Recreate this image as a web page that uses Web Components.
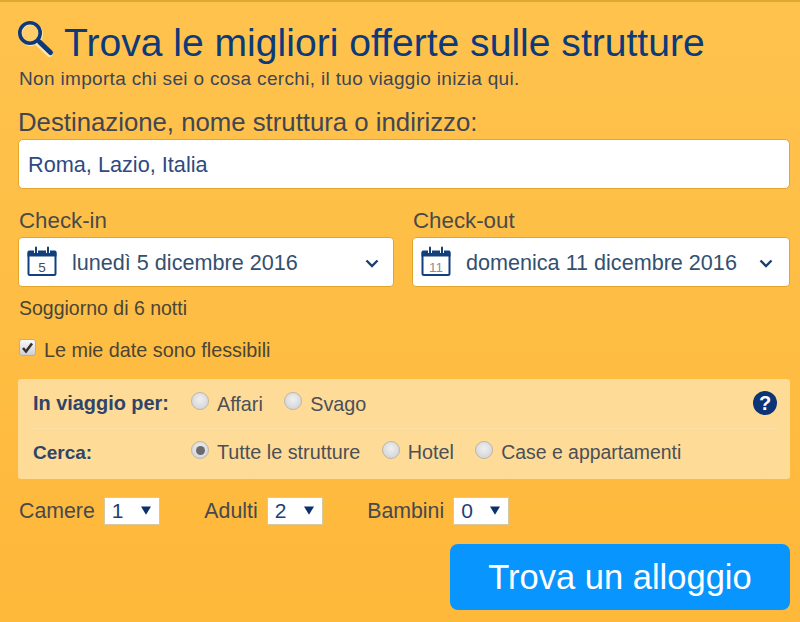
<!DOCTYPE html>
<html lang="it">
<head>
<meta charset="utf-8">
<title>Trova un alloggio</title>
<style>
html,body{margin:0;padding:0;width:800px;height:622px;overflow:hidden;}
body{font-family:"Liberation Sans",Arial,sans-serif;}
</style>
</head>
<body>
<search-box>
  <search-heading slot="head" subtitle="Non importa chi sei o cosa cerchi, il tuo viaggio inizia qui.">Trova le migliori offerte sulle strutture</search-heading>
  <dest-field label="Destinazione, nome struttura o indirizzo:" value="Roma, Lazio, Italia"></dest-field>
  <date-row>
    <date-field label="Check-in" day="5" value="lunedì 5 dicembre 2016"></date-field>
    <date-field label="Check-out" day="11" value="domenica 11 dicembre 2016" style="--day-color:#8a8f96"></date-field>
  </date-row>
  <stay-info text="Soggiorno di 6 notti" label="Le mie date sono flessibili"></stay-info>
  <option-panel>
    <option-row label="In viaggio per:" help style="--text-down:2px">
      <radio-option>Affari</radio-option>
      <radio-option>Svago</radio-option>
    </option-row>
    <option-row label="Cerca:" divider style="--label-size:19px">
      <radio-option checked>Tutte le strutture</radio-option>
      <radio-option>Hotel</radio-option>
      <radio-option style="font-size:19.400px">Case e appartamenti</radio-option>
    </option-row>
  </option-panel>
  <guest-row>
    <guest-select label="Camere" value="1"></guest-select>
    <guest-select label="Adulti" value="2"></guest-select>
    <guest-select label="Bambini" value="0"></guest-select>
  </guest-row>
  <submit-button>Trova un alloggio</submit-button>
</search-box>

<script>
class SearchBox extends HTMLElement{
    constructor(){
        super();
        this.attachShadow({mode:'open'});
        this.shadowRoot.innerHTML = `
        <style>
            :host{
                display:block;
                box-sizing:border-box;
                width:800px;
                height:622px;
                padding:18px 10px 0 18px;
                border-top:2px solid #e0a82e;
                background:linear-gradient(#fec34e,#feb83a);
                color:#3f4a5c;
            }
        </style>
        <slot name="head"></slot>
        <slot></slot>`;
    }
}
customElements.define('search-box',SearchBox);

class SearchHeading extends HTMLElement{
    constructor(){
        super();
        this.attachShadow({mode:'open'});
        this.shadowRoot.innerHTML = `
        <style>
            :host{display:block;height:84px;margin-left:-1px;}
            .top{display:flex;align-items:center;gap:9px;height:46px;}
            svg{flex:none;width:38px;height:38px;margin-top:-6px;}
            h1{margin:0;font-size:39.100px;line-height:46px;font-weight:normal;color:#0d3a7a;white-space:nowrap;}
            p{margin:2px 0 0 2px;font-size:19px;line-height:22px;letter-spacing:.33px;color:#3d4657;white-space:nowrap;}
        </style>
        <div class="top">
            <svg viewBox="0 0 38 38">
                <circle cx="13.800" cy="13" r="10.400" fill="none" stroke="#fff" stroke-width="3.500" opacity=".55"/>
                <path d="M22 23 L32.500 33" stroke="#fff" stroke-width="6" stroke-linecap="round" opacity=".6"/>
                <circle cx="13" cy="12" r="10.200" fill="#ffd98a" fill-opacity=".5" stroke="#0d3a7a" stroke-width="3.600"/>
                <path d="M22.500 21 L33.500 31.500" stroke="#0d3a7a" stroke-width="5" stroke-linecap="round"/>
            </svg>
            <h1><slot></slot></h1>
        </div>
        <p></p>`;
    }
    connectedCallback(){
        this.shadowRoot.querySelector('p').textContent = this.getAttribute('subtitle');
    }
}
customElements.define('search-heading',SearchHeading);

class DestField extends HTMLElement{
    constructor(){
        super();
        this.attachShadow({mode:'open'});
        this.shadowRoot.innerHTML = `
        <style>
            :host{display:block;margin-top:5px;}
            label{display:block;font-size:25.750px;line-height:26px;color:#3f4654;white-space:nowrap;}
            .box{
                box-sizing:border-box;height:50px;margin-top:4px;padding:2px 0 0 9px;
                display:flex;align-items:center;
                background:#fff;border:1px solid #e2a52c;border-radius:5px;
                font-size:21.700px;color:#2f4a80;
            }
        </style>
        <label></label>
        <div class="box"></div>`;
    }
    connectedCallback(){
        this.shadowRoot.querySelector('label').textContent = this.getAttribute('label');
        this.shadowRoot.querySelector('.box').textContent = this.getAttribute('value');
    }
}
customElements.define('dest-field',DestField);

class DateRow extends HTMLElement{
    constructor(){
        super();
        this.attachShadow({mode:'open'});
        this.shadowRoot.innerHTML = `
        <style>
            :host{display:grid;grid-template-columns:376px 378px;column-gap:18px;margin-top:20px;}
        </style>
        <slot></slot>`;
    }
}
customElements.define('date-row',DateRow);

class DateField extends HTMLElement{
    constructor(){
        super();
        this.attachShadow({mode:'open'});
        this.shadowRoot.innerHTML = `
        <style>
            :host{display:block;}
            :host(:last-child) .chev{margin-right:2px;}
            label{display:block;margin-left:1px;font-size:22.300px;line-height:24px;color:#4a4a4a;}
            .box{
                box-sizing:border-box;height:50px;margin-top:4px;padding:2px 14px 0 7px;
                display:flex;align-items:center;
                background:#fff;border:1px solid #e2a52c;border-radius:4px;
                font-size:21.600px;color:#33506f;white-space:nowrap;
            }
            .cal{flex:none;width:32px;height:32px;margin:-2px 14px 0 0;}
            .cal text{font-family:"Liberation Sans",Arial,sans-serif;font-size:13.500px;fill:var(--day-color,#4a4d52);text-anchor:middle;}
            .val{flex:1;}
            .chev{flex:none;width:14px;height:9px;}
        </style>
        <label></label>
        <div class="box">
            <svg class="cal" viewBox="0 0 32 32">
                <path d="M1.500 10.500V6a1.500 1.500 0 0 1 1.500-1.500h26a1.500 1.500 0 0 1 1.500 1.500v4.500z" fill="#12407f"/>
                <rect x="2.500" y="6" width="27" height="23" rx="1.500" fill="none" stroke="#12407f" stroke-width="2"/>
                <path d="M10 2v5M22 2v5" stroke="#fff" stroke-width="4"/>
                <path d="M10 1.500v5.500M22 1.500v5.500" stroke="#12407f" stroke-width="2" stroke-linecap="round"/>
                <text x="16" y="25.500"></text>
            </svg>
            <span class="val"></span>
            <svg class="chev" viewBox="0 0 14 9"><path d="M1.500 1.500 L7 7 L12.500 1.500" fill="none" stroke="#1d3f70" stroke-width="2.400"/></svg>
        </div>`;
    }
    connectedCallback(){
        this.shadowRoot.querySelector('label').textContent = this.getAttribute('label');
        this.shadowRoot.querySelector('.val').textContent = this.getAttribute('value');
        this.shadowRoot.querySelector('text').textContent = this.getAttribute('day');
    }
}
customElements.define('date-field',DateField);

class StayInfo extends HTMLElement{
    constructor(){
        super();
        this.attachShadow({mode:'open'});
        this.shadowRoot.innerHTML = `
        <style>
            :host{display:block;margin-top:10px;font-size:19.500px;color:#4a4536;white-space:nowrap;}
            .txt{margin-left:1px;line-height:22px;}
            .flex{display:flex;align-items:center;gap:8px;margin:20px 0 0 1px;height:22px;font-size:19.800px;}
            .check{
                box-sizing:border-box;width:17px;height:17px;margin-top:-6px;border-radius:3px;
                background:linear-gradient(#fafafa,#cfcfd2);border:1px solid #b6b0a0;
                display:flex;align-items:center;justify-content:center;
            }
            .check svg{width:13px;height:13px;}
        </style>
        <div class="txt"></div>
        <div class="flex">
            <span class="check"><svg viewBox="0 0 13 13"><path d="M2 7 L5 10.500 L11 2.500" fill="none" stroke="#333" stroke-width="2.600"/></svg></span>
            <span class="lbl"></span>
        </div>`;
    }
    connectedCallback(){
        this.shadowRoot.querySelector('.txt').textContent = this.getAttribute('text');
        this.shadowRoot.querySelector('.lbl').textContent = this.getAttribute('label');
    }
}
customElements.define('stay-info',StayInfo);

class OptionPanel extends HTMLElement{
    constructor(){
        super();
        this.attachShadow({mode:'open'});
        this.shadowRoot.innerHTML = `
        <style>
            :host{
                display:block;box-sizing:border-box;height:100px;margin-top:18px;
                padding:0 13px 0 15px;border-radius:3px;background:#fedb97;
            }
        </style>
        <slot></slot>`;
    }
}
customElements.define('option-panel',OptionPanel);

class OptionRow extends HTMLElement{
    constructor(){
        super();
        this.attachShadow({mode:'open'});
        this.shadowRoot.innerHTML = `
        <style>
            :host{display:flex;align-items:center;box-sizing:border-box;height:49px;}
            :host([divider]){border-top:1px solid #fde0a8;height:50px;padding-bottom:2px;}
            b{flex:none;width:158px;font-size:var(--label-size,19.900px);color:#2f4468;white-space:nowrap;}
            .opts{flex:1;display:flex;gap:21.400px;}
            .help{flex:none;width:24px;height:24px;margin-top:-2px;}
            .help text{font-family:"Liberation Sans",Arial,sans-serif;font-weight:bold;font-size:20px;fill:#fff;text-anchor:middle;}
        </style>
        <b></b>
        <div class="opts"><slot></slot></div>`;
    }
    connectedCallback(){
        if(this.hasAttribute('help')){
            this.shadowRoot.innerHTML += `<svg class="help" viewBox="0 0 24 24"><circle cx="12" cy="12" r="12" fill="#0b3577"/><text x="12" y="19">?</text></svg>`;
        }
        this.shadowRoot.querySelector('b').textContent = this.getAttribute('label');
    }
}
customElements.define('option-row',OptionRow);

class RadioOption extends HTMLElement{
    constructor(){
        super();
        this.attachShadow({mode:'open'});
        this.shadowRoot.innerHTML = `
        <style>
            :host{display:inline-flex;align-items:center;gap:8px;font-size:19.800px;color:#4b4f58;white-space:nowrap;}
            span{padding-top:var(--text-down,0);}
            i{
                box-sizing:border-box;flex:none;width:18px;height:18px;margin-top:-5px;border-radius:50%;
                border:1px solid #bdb6a6;
                background:radial-gradient(circle at 50% 40%,#f0f0f0,#cdced2);
                display:flex;align-items:center;justify-content:center;
            }
            :host([checked]) i::after{content:"";width:9px;height:9px;border-radius:50%;background:#6b6b6f;}
        </style>
        <i></i><span><slot></slot></span>`;
    }
}
customElements.define('radio-option',RadioOption);

class GuestRow extends HTMLElement{
    constructor(){
        super();
        this.attachShadow({mode:'open'});
        this.shadowRoot.innerHTML = `
        <style>
            :host{display:flex;gap:44.600px;margin:18px 0 0 1px;}
        </style>
        <slot></slot>`;
    }
}
customElements.define('guest-row',GuestRow);

class GuestSelect extends HTMLElement{
    constructor(){
        super();
        this.attachShadow({mode:'open'});
        this.shadowRoot.innerHTML = `
        <style>
            :host{display:flex;align-items:center;gap:9px;font-size:21.300px;color:#47484f;}
            .sel{
                box-sizing:border-box;width:56px;height:28px;padding:0 8px 0 7px;
                display:flex;align-items:center;justify-content:space-between;
                background:#fff;border:1px solid #d9c9a0;color:#1d3f78;font-size:21px;
            }
            svg{width:10px;height:9px;margin-top:-2px;}
        </style>
        <span class="lbl"></span>
        <div class="sel"><span class="val"></span><svg viewBox="0 0 10 9"><path d="M0 .5h10L5 8.800z" fill="#0d2f6b"/></svg></div>`;
    }
    connectedCallback(){
        this.shadowRoot.querySelector('.lbl').textContent = this.getAttribute('label');
        this.shadowRoot.querySelector('.val').textContent = this.getAttribute('value');
    }
}
customElements.define('guest-select',GuestSelect);

class SubmitButton extends HTMLElement{
    constructor(){
        super();
        this.attachShadow({mode:'open'});
        this.shadowRoot.innerHTML = `
        <style>
            :host{display:flex;justify-content:flex-end;margin-top:19px;}
            button{
                box-sizing:border-box;width:340px;height:66px;padding:0;border:0;border-radius:8px;
                background:#0896fe;color:#fff;
                font-family:"Liberation Sans",Arial,sans-serif;font-size:34.500px;
            }
        </style>
        <button><slot></slot></button>`;
    }
}
customElements.define('submit-button',SubmitButton);
</script>
</body>
</html>
